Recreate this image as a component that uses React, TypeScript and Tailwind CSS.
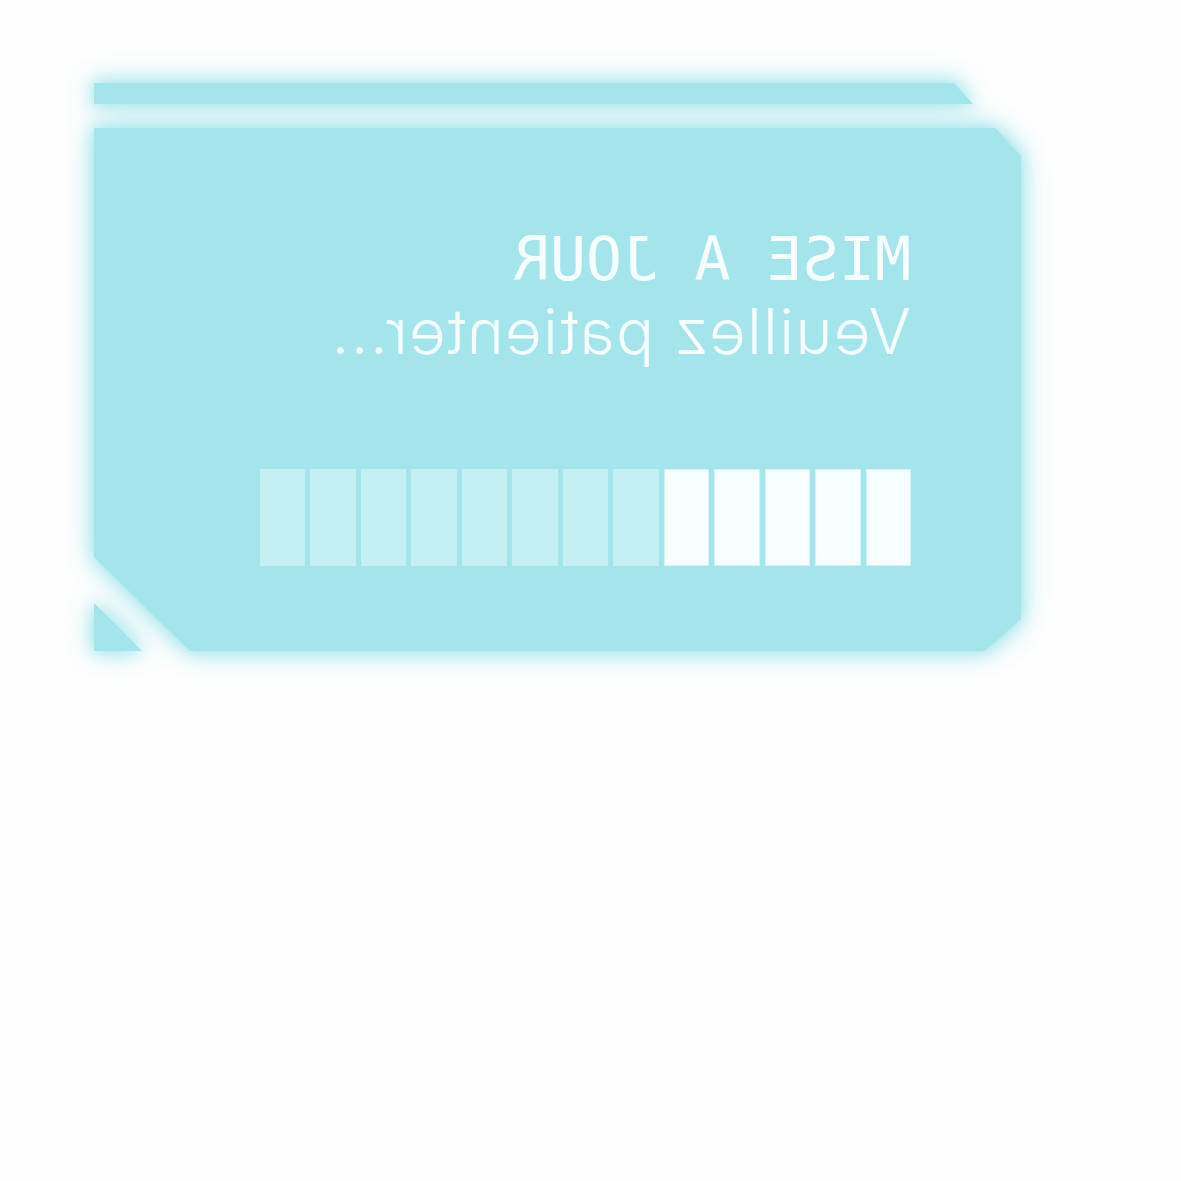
export default function App() {
  const bars = Array.from({ length: 13 }, (_, i) => i < 5)

  return (
    <div className="min-h-[1181px] bg-[#fefefe] pt-[83px] pl-[94px]">
      <div className="relative flex w-[927px] flex-col gap-[24px] [filter:drop-shadow(0_0_7px_#a4e5ec)_drop-shadow(0_0_14px_#b0e9ef)]">
        <div className="h-[21px] w-[879px] bg-[#a4e5ec] [clip-path:polygon(0_0,860px_0,100%_100%,0_100%)]" />

        <div className="h-[523px] bg-[#a4e5ec] [clip-path:polygon(0_0,901px_0,100%_28px,100%_491px,891px_100%,96px_100%,0_429px)]">
          <div className="-scale-x-100 flex flex-col pt-[101px] pl-[110px] pr-[166px] text-[#f6feff]">
            <p className="font-['DejaVu_Sans_Mono',monospace] text-[60px] leading-none">MISE A JOUR</p>
            <p className="mt-[11px] font-['Inter',sans-serif] text-[63px] font-light leading-none tracking-[1.4px]">
              Veuillez patienter...
            </p>

            <div className="mt-[106px] grid h-[97px] grid-cols-13 gap-[5px]">
              {bars.map((on, i) =>
                on ? (
                  <div key={i} className="border border-[#d3f5f8] bg-[#f6feff]" />
                ) : (
                  <div key={i} className="bg-[#c4eff3] blur-[0.6px]" />
                )
              )}
            </div>
          </div>
        </div>

        <div className="absolute bottom-0 left-0 h-[48px] w-[48px] bg-[#a4e5ec] [clip-path:polygon(0_0,100%_100%,0_100%)]" />
      </div>
    </div>
  )
}
